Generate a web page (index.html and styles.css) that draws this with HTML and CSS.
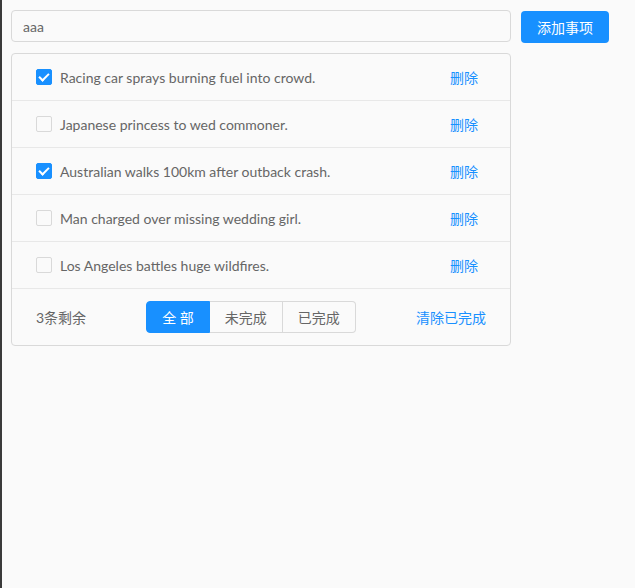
FILE: index.html
```html
<!DOCTYPE html>
<html lang="zh-CN">
<head>
    <meta charset="UTF-8">
    <meta name="viewport" content="width=device-width, initial-scale=1.0">
    <title>Todo</title>
    <link rel="stylesheet" href="styles.css">
</head>
<body>
    <div class="app">
        <div class="add-bar">
            <input class="add-input" type="text" value="aaa">
            <button class="add-btn">添加事项</button>
        </div>

        <div class="todo-list">
            <div class="todo-item">
                <span class="check checked"></span>
                <span class="todo-text">Racing car sprays burning fuel into crowd.</span>
                <a class="del-btn">删除</a>
            </div>
            <div class="todo-item">
                <span class="check"></span>
                <span class="todo-text">Japanese princess to wed commoner.</span>
                <a class="del-btn">删除</a>
            </div>
            <div class="todo-item">
                <span class="check checked"></span>
                <span class="todo-text">Australian walks 100km after outback crash.</span>
                <a class="del-btn">删除</a>
            </div>
            <div class="todo-item">
                <span class="check"></span>
                <span class="todo-text">Man charged over missing wedding girl.</span>
                <a class="del-btn">删除</a>
            </div>
            <div class="todo-item">
                <span class="check"></span>
                <span class="todo-text">Los Angeles battles huge wildfires.</span>
                <a class="del-btn">删除</a>
            </div>

            <div class="todo-footer">
                <span class="remain">3条剩余</span>
                <div class="filters">
                    <button class="filter-btn active">全 部</button>
                    <button class="filter-btn">未完成</button>
                    <button class="filter-btn">已完成</button>
                </div>
                <a class="clear-btn">清除已完成</a>
            </div>
        </div>
    </div>
</body>
</html>
```

FILE: styles.css
```css
html, body {
    margin: 0;
    padding: 0;
    height: 100%;
}

body {
    background-color: #fafafa;
    border-left: 2px solid #3a3a3a;
    box-sizing: border-box;
    font-family: Lato, "Noto Sans CJK SC", sans-serif;
    font-size: 14px;
    color: #666;
}

.app {
    padding: 10px 9px;
    width: 600px;
}

.add-bar {
    display: flex;
    align-items: flex-start;
    gap: 10px;
}

.add-input {
    width: 500px;
    height: 32px;
    box-sizing: border-box;
    padding: 0 11px;
    border: 1px solid #d9d9d9;
    border-radius: 4px;
    background-color: #fafafa;
    font-family: inherit;
    font-size: 14px;
    color: #666;
    outline: none;
}

.add-btn {
    width: 88px;
    height: 32px;
    margin-top: 1px;
    border: none;
    border-radius: 4px;
    background-color: #1890ff;
    color: white;
    font-family: inherit;
    font-size: 14px;
    cursor: pointer;
}

.todo-list {
    width: 500px;
    box-sizing: border-box;
    margin-top: 10px;
    border: 1px solid #d9d9d9;
    border-radius: 4px;
}

.todo-item {
    display: flex;
    align-items: center;
    height: 46px;
    padding: 0 24px;
    border-bottom: 1px solid #e8e8e8;
}

.check {
    width: 16px;
    height: 16px;
    box-sizing: border-box;
    border: 1px solid #d9d9d9;
    border-radius: 2px;
    background-color: #fafafa;
    flex-shrink: 0;
    position: relative;
}

.check.checked {
    background-color: #1890ff;
    border-color: #1890ff;
}

/* 체크 표시 */
.check.checked::after {
    content: "";
    position: absolute;
    left: 4px;
    top: 1px;
    width: 4px;
    height: 8px;
    border: solid white;
    border-width: 0 2px 2px 0;
    transform: rotate(45deg);
}

.todo-text {
    flex: 1;
    margin-left: 8px;
}

.del-btn {
    padding: 0 8px;
    color: #1890ff;
    cursor: pointer;
}

.todo-footer {
    display: flex;
    align-items: center;
    justify-content: space-between;
    height: 56px;
    padding: 0 24px;
}

.filters {
    display: flex;
}

.filter-btn {
    height: 32px;
    margin: 0;
    padding: 0 15px;
    border: 1px solid #d9d9d9;
    background-color: #fafafa;
    color: #666;
    font-family: inherit;
    font-size: 14px;
    white-space: nowrap;
    cursor: pointer;
}

.filter-btn + .filter-btn {
    border-left: none;
}

.filter-btn:first-child {
    border-radius: 4px 0 0 4px;
}

.filter-btn:last-child {
    border-radius: 0 4px 4px 0;
}

.filter-btn.active {
    background-color: #1890ff;
    border-color: #1890ff;
    color: white;
}

.clear-btn {
    color: #1890ff;
    cursor: pointer;
}
```
